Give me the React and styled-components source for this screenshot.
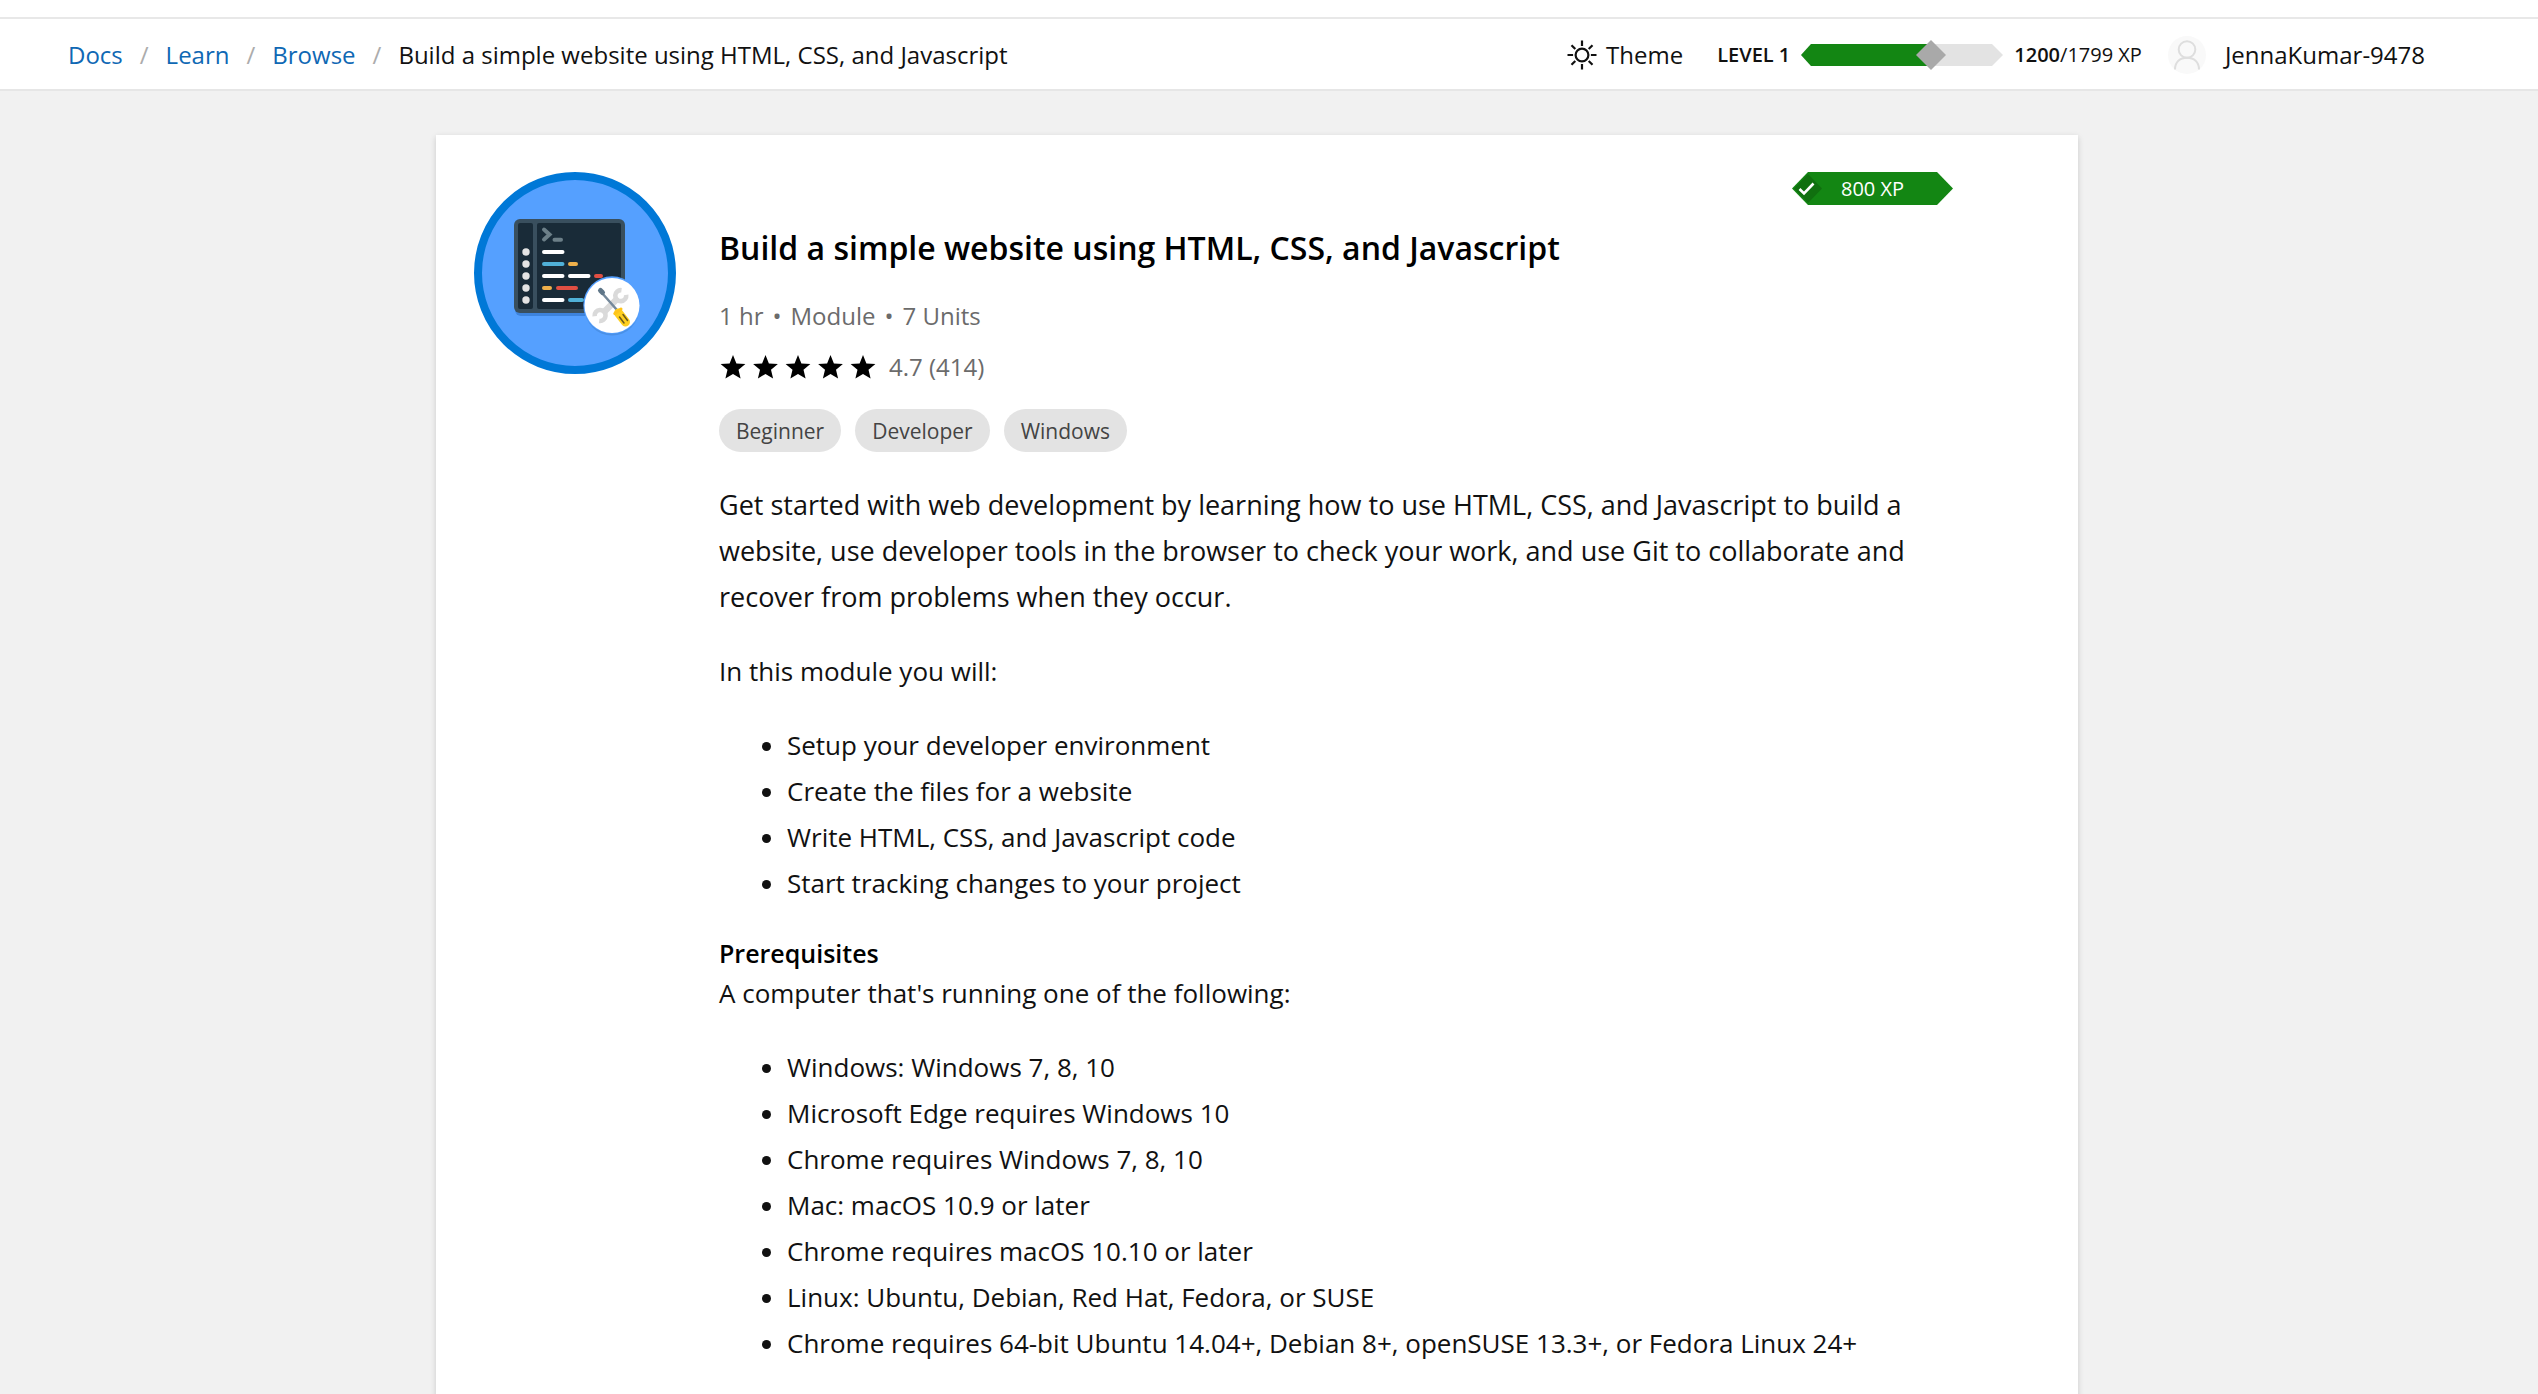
import React from "react";
import styled, { createGlobalStyle } from "styled-components";

const GlobalStyle = createGlobalStyle`
  *, *::before, *::after { box-sizing: border-box; }
  body {
    margin: 0;
    background: #f1f1f1;
    color: #111;
    font-family: "Segoe UI", "Open Sans", "Noto Sans", sans-serif;
    font-size: 26px;
    line-height: 40px;
  }
  h1, h2, p, ul, ol { margin: 0; padding: 0; }
`;

const Page = styled.div`
  min-height: 100vh;
  display: flex;
  flex-direction: column;
`;

const TopStrip = styled.div`
  height: 17px;
  background: #fff;
`;

const Header = styled.header`
  display: flex;
  align-items: center;
  justify-content: space-between;
  min-height: 74px;
  padding: 2px 113px 0 68px;
  background: #fff;
  border-top: 2px solid #e8e8e8;
  border-bottom: 2px solid #e6e6e6;
  font-size: 24px;
`;

const Crumbs = styled.ol`
  display: flex;
  list-style: none;
`;

const Crumb = styled.li`
  display: flex;
  white-space: nowrap;

  & + &::before {
    content: "/";
    padding: 0 17px;
    color: #acacac;
  }
`;

const CrumbLink = styled.a`
  color: #0f68b4;
  text-decoration: none;
`;

const Tools = styled.div`
  display: flex;
  align-items: center;
`;

const ThemeButton = styled.button`
  display: flex;
  align-items: center;
  gap: 9px;
  margin-right: 34px;
  padding: 0;
  border: 0;
  background: none;
  color: inherit;
  font: inherit;
  cursor: pointer;
`;

const Level = styled.div`
  display: flex;
  align-items: center;
  gap: 11px;
  margin-right: 26px;
  font-size: 20px;
  white-space: nowrap;
`;

const Strong = styled.strong`
  font-weight: 600;
`;

const UserLink = styled.a`
  display: flex;
  align-items: center;
  gap: 19px;
  color: inherit;
  text-decoration: none;
`;

const Main = styled.main`
  flex: 1;
  display: flex;
  justify-content: center;
  padding: 44px 24px 0 0;
`;

const Card = styled.article`
  display: grid;
  grid-template-columns: 202px minmax(0, 1fr);
  align-items: start;
  column-gap: 43px;
  width: 100%;
  max-width: 1642px;
  padding: 37px 125px 32px 38px;
  background: #fff;
  box-shadow: 0 2px 6px rgba(0, 0, 0, 0.16);
`;

const Body = styled.div`
  display: flex;
  flex-direction: column;
`;

const XpBadge = styled.div`
  align-self: flex-end;
  display: grid;
  width: 161px;
  height: 33px;
  margin-bottom: 20px;

  & > * { grid-area: 1 / 1; }
`;

const XpText = styled.span`
  padding-top: 1px;
  color: #fff;
  font-size: 20px;
  line-height: 32px;
  text-align: center;
`;

const Title = styled.h1`
  margin-bottom: 25px;
  font-size: 32px;
  font-weight: 600;
  line-height: 46px;
  color: #000;
`;

const Meta = styled.p`
  display: flex;
  gap: 9px;
  margin-bottom: 11px;
  color: #6b6b6b;
  font-size: 24px;
`;

const Rating = styled.div`
  display: flex;
  align-items: center;
  gap: 12px;
  margin-bottom: 22px;
  color: #6b6b6b;
  font-size: 24px;
`;

const Tags = styled.ul`
  display: flex;
  gap: 14px;
  margin-bottom: 30px;
  list-style: none;
`;

const Tag = styled.li`
  padding: 1px 17px 0;
  border-radius: 22px;
  background: #e3e3e3;
  color: #444;
  font-size: 21px;
  line-height: 42px;
`;

const Summary = styled.p`
  margin-bottom: 31px;
  font-size: 27px;
  line-height: 46px;
`;

const SubHeading = styled.h2`
  font-size: 25px;
  font-weight: 600;
  line-height: 40px;
  color: #000;
`;

const List = styled.ul`
  margin: 31px 0 27px;
  padding-left: 68px;
  line-height: 46px;
`;

const goals = [
  "Setup your developer environment",
  "Create the files for a website",
  "Write HTML, CSS, and Javascript code",
  "Start tracking changes to your project",
];

const requirements = [
  "Windows: Windows 7, 8, 10",
  "Microsoft Edge requires Windows 10",
  "Chrome requires Windows 7, 8, 10",
  "Mac: macOS 10.9 or later",
  "Chrome requires macOS 10.10 or later",
  "Linux: Ubuntu, Debian, Red Hat, Fedora, or SUSE",
  "Chrome requires 64-bit Ubuntu 14.04+, Debian 8+, openSUSE 13.3+, or Fedora Linux 24+",
];

function SunIcon() {
  return (
    <svg width="30" height="30" viewBox="0 0 30 30" fill="none" stroke="#111" strokeWidth="2.2" aria-hidden="true">
      <circle cx="15" cy="15" r="6.4" />
      <path d="M15 0.5v5.6M15 23.9v5.6M0.5 15h5.6M23.9 15h5.6M4.5 5.2l3.8 3.8M21.7 21l3.8 3.8M25.5 5.2l-3.8 3.8M8.3 21l-3.8 3.8" />
    </svg>
  );
}

function LevelBar() {
  return (
    <svg width="202" height="32" viewBox="0 0 202 32" role="img" aria-label="1200 of 1799 XP">
      <path d="M10 5H191L202 16L191 27H10L0 16Z" fill="#e3e3e3" />
      <path d="M10 5H130V27H10L0 16Z" fill="#138613" />
      <path d="M130 1L145 16L130 31L115 16Z" fill="#a9a9a9" />
    </svg>
  );
}

function Avatar() {
  return (
    <svg width="38" height="38" viewBox="0 0 38 38" fill="none" stroke="#dedede" strokeWidth="2" aria-hidden="true">
      <circle cx="19" cy="19" r="19" fill="#f9f9f9" stroke="none" />
      <circle cx="19" cy="13.5" r="8.3" />
      <path d="M7 33.5C7 26 12 21.8 19 21.8S31 26 31 33.5" />
    </svg>
  );
}

function XpShape() {
  return (
    <svg width="161" height="33" viewBox="0 0 161 33" aria-hidden="true">
      <path d="M16 0H145L161 16.5L145 33H16L0 16.5Z" fill="#138613" />
      <path d="M16 2L30 16.5L16 31L2 16.5Z" fill="#10700f" />
      <path d="M7.5 17L12 21.5L21.5 11.5" fill="none" stroke="#fff" strokeWidth="2.6" />
    </svg>
  );
}

function Stars() {
  return (
    <svg width="158" height="24" viewBox="0 0 158 24" fill="#000" role="img" aria-label="4.7 out of 5 stars">
      {[0, 1, 2, 3, 4].map((i) => (
        <path
          key={i}
          transform={`translate(${2 + i * 32.5} 0)`}
          d="M12 0L15.4 8.4L24.4 9L17.5 14.8L19.6 23.6L12 18.9L4.4 23.6L6.5 14.8L-0.4 9L8.6 8.4Z"
        />
      ))}
    </svg>
  );
}

function ModuleIcon() {
  return (
    <svg width="202" height="202" viewBox="0 0 202 202" strokeLinecap="round" aria-hidden="true">
      <circle cx="101" cy="101" r="97" fill="#55a0ff" stroke="#0078d7" strokeWidth="8" />
      <rect x="41" y="50" width="110" height="94" rx="6" fill="#3d83dc" />
      <rect x="40" y="47" width="111" height="94" rx="6" fill="#394f5e" />
      <rect x="44" y="51" width="15" height="86" rx="2" fill="#192b38" />
      <rect x="63" y="51" width="84" height="86" rx="2" fill="#192b38" />
      <g fill="#e3e3e3">
        <circle cx="52" cy="80" r="3.7" />
        <circle cx="52" cy="92" r="3.7" />
        <circle cx="52" cy="104" r="3.7" />
        <circle cx="52" cy="116" r="3.7" />
        <circle cx="52" cy="128" r="3.7" />
      </g>
      <g fill="none" strokeWidth="4">
        <path d="M70 57.5L75.5 62.5L70 67.5M80.5 67.7H87" stroke="#6c7f88" />
        <path d="M70 80H88.5M70 104H88.5M96 104H114.5M70 128H88.5" stroke="#fff" />
        <path d="M70 92H88.5M96 128H108" stroke="#50b1d8" />
        <path d="M96 92H102M70 116H76" stroke="#eeb04b" />
        <path d="M122 104H127M84 116H102" stroke="#e04f43" />
      </g>
      <circle cx="138" cy="136" r="27.5" fill="#4a90e6" />
      <circle cx="138" cy="133" r="28.7" fill="#55a0ff" />
      <circle cx="138" cy="133.5" r="27.5" fill="#fff" />
      <g fill="none" stroke="#dadada" strokeLinecap="butt">
        <path d="M144 126L129 141" strokeWidth="6.5" />
        <path d="M147.5 118.2A5.5 5.5 0 1 0 152.2 122.8" strokeWidth="4.6" />
        <path d="M120.6 144.2A5.5 5.5 0 1 1 125.2 148.9" strokeWidth="4.6" />
      </g>
      <path d="M128 121L143 138" stroke="#74889a" strokeWidth="2.5" />
      <path d="M126.5 118.5L128.5 120.5" stroke="#5f7688" strokeWidth="5" />
      <path d="M144.5 141L151.5 150" stroke="#ffcf1f" strokeWidth="9" />
      <path d="M140.8 141.5L147 137" stroke="#ffc41a" strokeWidth="3" />
      <path d="M145.5 145L150 151M149 142.5L153.5 148.5" stroke="#6d5a1c" strokeWidth="1.5" />
    </svg>
  );
}

export default function App() {
  return (
    <Page>
      <GlobalStyle />
      <TopStrip />
      <Header>
        <nav aria-label="Breadcrumb">
          <Crumbs>
            <Crumb><CrumbLink href="#docs">Docs</CrumbLink></Crumb>
            <Crumb><CrumbLink href="#learn">Learn</CrumbLink></Crumb>
            <Crumb><CrumbLink href="#browse">Browse</CrumbLink></Crumb>
            <Crumb>Build a simple website using HTML, CSS, and Javascript</Crumb>
          </Crumbs>
        </nav>
        <Tools>
          <ThemeButton type="button"><SunIcon />Theme</ThemeButton>
          <Level>
            <Strong>LEVEL 1</Strong>
            <LevelBar />
            <span><Strong>1200</Strong>/1799 XP</span>
          </Level>
          <UserLink href="#profile"><Avatar />JennaKumar-9478</UserLink>
        </Tools>
      </Header>
      <Main>
        <Card>
          <ModuleIcon />
          <Body>
            <XpBadge>
              <XpShape />
              <XpText>800 XP</XpText>
            </XpBadge>
            <Title>Build a simple website using HTML, CSS, and Javascript</Title>
            <Meta><span>1 hr</span><span>•</span><span>Module</span><span>•</span><span>7 Units</span></Meta>
            <Rating><Stars />4.7 (414)</Rating>
            <Tags>
              <Tag>Beginner</Tag>
              <Tag>Developer</Tag>
              <Tag>Windows</Tag>
            </Tags>
            <Summary>
              Get started with web development by learning how to use HTML, CSS, and Javascript to build a website,
              use developer tools in the browser to check your work, and use Git to collaborate and recover from
              problems when they occur.
            </Summary>
            <p>In this module you will:</p>
            <List>{goals.map((goal) => <li key={goal}>{goal}</li>)}</List>
            <SubHeading>Prerequisites</SubHeading>
            <p>A computer that's running one of the following:</p>
            <List>{requirements.map((item) => <li key={item}>{item}</li>)}</List>
          </Body>
        </Card>
      </Main>
    </Page>
  );
}
